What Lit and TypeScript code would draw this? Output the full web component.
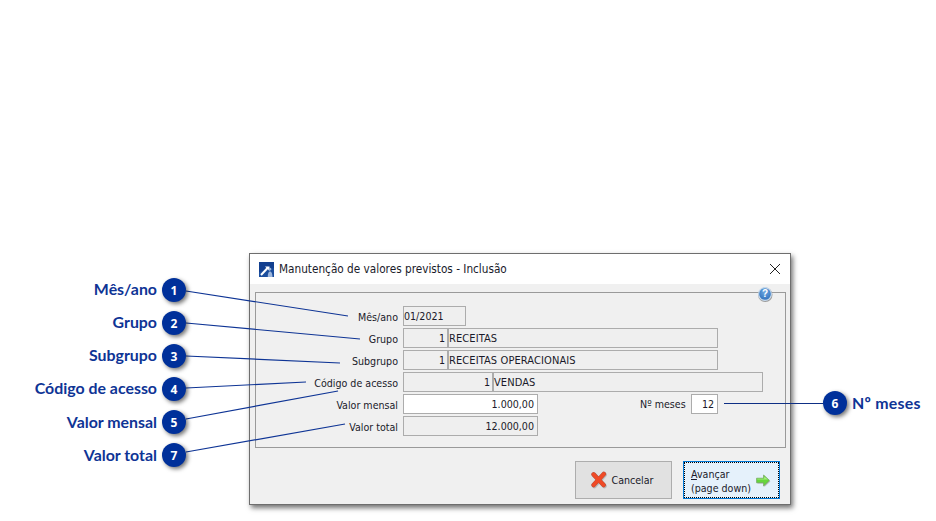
import { LitElement, html, css, svg } from "lit";
import { customElement } from "lit/decorators.js";

const callouts = [
  { n: "1", label: "Mês/ano", y: 290, ly: 279, line: "186,291 348,316" },
  { n: "2", label: "Grupo", y: 323, ly: 312, line: "186,323 360,339" },
  { n: "3", label: "Subgrupo", y: 356, ly: 345, line: "186,356 340,363" },
  { n: "4", label: "Código de acesso", y: 389, ly: 378, line: "186,388 306,382" },
  { n: "5", label: "Valor mensal", y: 422, ly: 412, line: "186,419 338,391" },
  { n: "7", label: "Valor total", y: 455, ly: 445, line: "186,452 345,424" },
];

@customElement("app-root")
export class AppRoot extends LitElement {
  static styles = css`
    :host {
      display: block;
      position: relative;
      width: 936px;
      height: 521px;
      background: #fff;
      overflow: hidden;
      font-family: "DejaVu Sans Condensed", "DejaVu Sans", sans-serif;
      font-stretch: condensed;
      color: #1a1a2a;
    }
    .page {
      padding: 253px 0 0 249px;
    }
    .window {
      box-sizing: border-box;
      width: 542px;
      height: 252px;
      border: 1px solid #6e6e6e;
      background: #f0f0f0;
      box-shadow: 2px 3px 5px rgba(0, 0, 0, 0.55);
      display: flex;
      flex-direction: column;
    }
    .title {
      height: 30px;
      flex: none;
      background: #fff;
      display: flex;
      align-items: center;
      padding: 0 9px;
      gap: 5px;
      font-size: 11.7px;
    }
    .title span {
      flex: 1;
    }
    .body {
      flex: 1;
      padding: 8px 4px 0 5px;
      position: relative;
    }
    .panel {
      box-sizing: border-box;
      width: 531px;
      height: 156px;
      border: 1px solid #9a9a9a;
      padding: 13px 0 0 0;
      display: grid;
      grid-template-columns: 147px 1fr;
      row-gap: 2px;
      grid-auto-rows: 20px;
      font-size: 10.6px;
    }
    .lbl {
      justify-self: end;
      align-self: center;
      padding-right: 5px;
      position: relative;
      top: 1px;
    }
    .fields {
      display: flex;
    }
    .box {
      box-sizing: border-box;
      height: 20px;
      border: 1px solid #acacac;
      background: #efefef;
      display: flex;
      align-items: center;
      padding: 0 2px 0 0;
      white-space: nowrap;
    }
    .caps {
      font-size: 11px;
      letter-spacing: 0.1px;
    }
    .r {
      justify-content: flex-end;
      padding-right: 2px;
    }
    .r4 {
      padding-right: 3px;
    }
    .white {
      background: #fff;
    }
    .w62 { width: 63px; }
    .w44 { width: 45px; }
    .w270 { width: 270px; }
    .w90 { width: 90px; }
    .w135 { width: 135px; }
    .w27 { width: 27px; }
    .meses {
      margin-left: 102px;
      margin-right: 5px;
      align-self: center;
      width: 46px;
      white-space: nowrap;
    }
    .help {
      position: absolute;
      left: 507px;
      top: 2px;
      width: 16px;
      height: 16px;
    }
    .actions {
      position: absolute;
      left: 325px;
      top: 177px;
      display: flex;
      gap: 11px;
    }
    .btn {
      box-sizing: border-box;
      width: 97px;
      height: 38px;
      font-size: 10.6px;
      display: flex;
      align-items: center;
      color: #1a1a2a;
    }
    .cancel {
      border: 1px solid #adadad;
      background: #e1e1e1;
      justify-content: center;
      gap: 3px;
      padding-right: 3px;
    }
    .next {
      border: 1px solid #0078d7;
      background: #e5f1fb;
      outline: 1px dotted #000;
      outline-offset: -2px;
      padding: 1px 8px 0 7px;
      justify-content: space-between;
      line-height: 14px;
    }
    .next u {
      text-underline-offset: 1px;
    }
    .overlay {
      position: absolute;
      left: 0;
      top: 0;
      pointer-events: none;
    }
    .badge {
      position: absolute;
      width: 24px;
      height: 24px;
      border-radius: 50%;
      background: #00309a;
      color: #fff;
      box-shadow: 2px 2px 4px rgba(0, 0, 0, 0.55);
      font-family: "Open Sans", sans-serif;
      font-stretch: normal;
      font-weight: 700;
      font-size: 12px;
      display: flex;
      align-items: center;
      justify-content: center;
    }
    .clabel {
      position: absolute;
      font-family: "Lato", sans-serif;
      font-stretch: normal;
      font-weight: 700;
      font-size: 15.9px;
      line-height: 20px;
      color: #0e3495;
      white-space: nowrap;
    }
    .right {
      right: 779px;
    }
    .wide {
      letter-spacing: 0.25px;
    }
  `;

  private windowIcon() {
    return html`<svg width="15" height="15" viewBox="0 0 15 15">
      <rect width="15" height="15" fill="#1b4e9e" />
      <path d="M0 0H15V6L0 10Z" fill="#123f8f" />
      <path d="M2 13L9 5.5" stroke="#fff" stroke-width="2" fill="none" />
      <path d="M6 4.5H10.5V9Z" fill="#fff" />
      <path d="M11 8.5a1.4 1.4 0 1 1 .01 0M8.8 15c0-4 1-5.5 2.2-5.5s2.5 1.5 2.5 5.5z" fill="#9db6dc" />
    </svg>`;
  }

  private cancelIcon() {
    return html`<svg width="18" height="18" viewBox="0 0 18 18">
      <path d="M4.5 4.5L14.5 15M14.5 4L4.5 15" stroke="#a9a9a9" stroke-width="4.6" stroke-linecap="round" fill="none" opacity=".7" />
      <path d="M3.6 3.4L13.6 14M13.8 3L3.6 14" stroke="#b5533f" stroke-width="4.6" stroke-linecap="round" fill="none" />
      <path d="M3.6 3.4L13.6 14M13.8 3L3.6 14" stroke="#f04a26" stroke-width="3.6" stroke-linecap="round" fill="none" />
    </svg>`;
  }

  private arrowIcon() {
    return html`<svg width="15" height="14" viewBox="0 0 15 14">
      <path d="M1.6 5.2H8.4V2L14.4 7.4L8.4 13V9.6H1.6Z" fill="#9a9a9a" opacity=".6" />
      <path d="M.6 4.2H7.6V1L13.4 6.4L7.6 12V8.8H.6Z" fill="#66d63c" stroke="#6fa05a" stroke-width=".7" />
      <path d="M1.2 4.8H8.2V2.4L12 5.6H1.2Z" fill="#a4ee7c" />
    </svg>`;
  }

  private helpIcon() {
    return html`<svg class="help" viewBox="0 0 16 16">
      <defs>
        <radialGradient id="hb" cx="50%" cy="35%" r="65%">
          <stop offset="0" stop-color="#6fa9e2" />
          <stop offset="1" stop-color="#2f6fbb" />
        </radialGradient>
      </defs>
      <circle cx="8.3" cy="8.8" r="7.2" fill="#777" opacity=".7" />
      <circle cx="8" cy="8" r="6.4" fill="url(#hb)" stroke="#c9dcee" stroke-width="1.1" />
      <text x="8" y="11.4" text-anchor="middle" font-family="Liberation Sans" font-weight="700" font-size="10" fill="#fff">?</text>
    </svg>`;
  }

  render() {
    return html`
      <div class="page">
        <div class="window">
          <div class="title">
            ${this.windowIcon()}
            <span>Manutenção de valores previstos - Inclusão</span>
            <svg width="12" height="12" viewBox="0 0 12 12">
              <path d="M1 1L11 11M11 1L1 11" stroke="#222" stroke-width="1" fill="none" />
            </svg>
          </div>
          <div class="body">
            <div class="panel">
              <div class="lbl">Mês/ano</div>
              <div class="fields"><div class="box w62">01/2021</div></div>
              <div class="lbl">Grupo</div>
              <div class="fields">
                <div class="box r w44">1</div>
                <div class="box caps w270">RECEITAS</div>
              </div>
              <div class="lbl">Subgrupo</div>
              <div class="fields">
                <div class="box r w44">1</div>
                <div class="box caps w270">RECEITAS OPERACIONAIS</div>
              </div>
              <div class="lbl">Código de acesso</div>
              <div class="fields">
                <div class="box r w90">1</div>
                <div class="box caps w270">VENDAS</div>
              </div>
              <div class="lbl">Valor mensal</div>
              <div class="fields">
                <div class="box r r4 white w135">1.000,00</div>
                <div class="meses">Nº meses</div>
                <div class="box r r4 white w27">12</div>
              </div>
              <div class="lbl">Valor total</div>
              <div class="fields"><div class="box r r4 w135">12.000,00</div></div>
            </div>
            ${this.helpIcon()}
            <div class="actions">
              <div class="btn cancel">${this.cancelIcon()}<span>Cancelar</span></div>
              <div class="btn next">
                <span><u>A</u>vançar<br />(page down)</span>
                ${this.arrowIcon()}
              </div>
            </div>
          </div>
        </div>
      </div>
      <svg class="overlay" width="936" height="521" viewBox="0 0 936 521">
        ${callouts.map(
          (c) => svg`<polyline points=${c.line} fill="none" stroke="#0e3495" stroke-width="1.2" />`
        )}
        <line x1="724" y1="403.5" x2="823" y2="403.5" stroke="#0e2f85" stroke-width="1" />
      </svg>
      ${callouts.map(
        (c) => html`
          <div class="clabel right" style="top:${c.ly}px">${c.label}</div>
          <div class="badge" style="left:162px;top:${c.y - 12}px">${c.n}</div>
        `
      )}
      <div class="badge" style="left:823px;top:391px">6</div>
      <div class="clabel wide" style="left:852px;top:393px">Nº meses</div>
    `;
  }
}
